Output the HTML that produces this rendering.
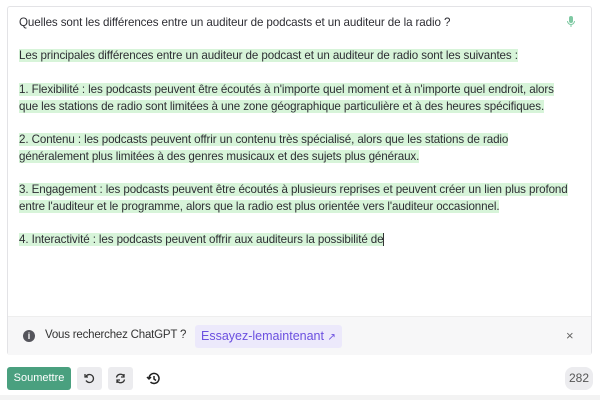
<!DOCTYPE html>
<html><head><meta charset="utf-8"><style>
body{margin:0;width:600px;height:400px;background:#fff;font-family:"Liberation Sans",sans-serif;position:relative;overflow:hidden}
.box{position:absolute;left:7px;top:6px;width:585px;height:349px;border:1px solid #e3e3e6;border-radius:3px;box-sizing:border-box}
.txt{position:absolute;left:19px;top:15px;width:560px;white-space:nowrap;font-size:11.6px;line-height:16.7px;color:#2d2d33;letter-spacing:-0.1px}
.g{background:#d7f4d9}
.banner{position:absolute;left:8px;top:316px;width:583px;height:38px;background:#f7f7f8;border-top:1px solid #eee}
.bot{position:absolute;left:0;right:0;top:395px;height:5px;background:#f3f3f3}
.btn{position:absolute;top:367px;height:23px;border-radius:3px}
</style></head><body>
<div class="box"></div>
<svg style="position:absolute;left:566px;top:15px" width="10" height="13" viewBox="0 0 10 13"><rect x="3" y="1" width="4" height="7" rx="2" fill="#7fc9a3"/><path d="M1.5 6a3.5 3.5 0 0 0 7 0M5 9.5v2.5" stroke="#7fc9a3" fill="none"/></svg>
<div class="txt">Quelles sont les différences entre un auditeur de podcasts et un auditeur de la radio ?<br><br><span class="g">Les principales différences entre un auditeur de podcast et un auditeur de radio sont les suivantes :</span><br><br><span class="g">1. Flexibilité : les podcasts peuvent être écoutés à n'importe quel moment et à n'importe quel endroit, alors</span><br><span class="g">que les stations de radio sont limitées à une zone géographique particulière et à des heures spécifiques.</span><br><br><span class="g">2. Contenu : les podcasts peuvent offrir un contenu très spécialisé, alors que les stations de radio</span><br><span class="g">généralement plus limitées à des genres musicaux et des sujets plus généraux.</span><br><br><span class="g">3. Engagement : les podcasts peuvent être écoutés à plusieurs reprises et peuvent créer un lien plus profond</span><br><span class="g"> entre l'auditeur et le programme, alors que la radio est plus orientée vers l'auditeur occasionnel.</span><br><br><span class="g">4. Interactivité : les podcasts peuvent offrir aux auditeurs la possibilité de</span><span style="border-left:1px solid #333"></span></div>
<div class="banner">
<div style="position:absolute;left:15px;top:13px;width:12px;height:12px;border-radius:50%;background:#55555c;color:#fff;font-size:9px;font-weight:bold;text-align:center;line-height:12px">i</div>
<div style="position:absolute;left:37px;top:12px;font-size:11.5px;letter-spacing:-0.2px;color:#333">Vous recherchez ChatGPT ?</div>
<div style="position:absolute;left:187px;top:8px;width:147px;height:23px;background:#ece9fb;border-radius:3px;color:#6b4fe0;font-size:12.5px;line-height:23px;padding-left:6px;box-sizing:border-box">Essayez-lemaintenant <span style="font-size:10px">↗</span></div>
<div style="position:absolute;left:558px;top:11px;font-size:13px;color:#666">×</div>
</div>
<div class="btn" style="left:7px;width:64px;background:#4aa07f;color:#fff;font-size:11px;line-height:23px;text-align:center">Soumettre</div>
<div class="btn" style="left:77px;width:25px;background:#ececef"><svg width="25" height="23" viewBox="0 0 25 23"><path d="M9 9.5a4 4 0 1 1 0 4" stroke="#333" stroke-width="1.3" fill="none"/><path d="M8 7v3h3" stroke="#333" stroke-width="1.3" fill="none"/></svg></div>
<div class="btn" style="left:108px;width:25px;background:#ececef"><svg width="25" height="23" viewBox="0 0 25 23"><path d="M8.5 10.5a4 4 0 0 1 7.5-1M16.5 12.5a4 4 0 0 1-7.5 1" stroke="#333" stroke-width="1.3" fill="none"/><path d="M16 7v3h-3M9 16v-3h3" stroke="#333" stroke-width="1.3" fill="none"/></svg></div>
<svg style="position:absolute;left:145px;top:370px" width="17" height="17" viewBox="0 0 17 17"><path d="M4 8.5a5 5 0 1 1 1.5 3.5" stroke="#222" stroke-width="1.5" fill="none"/><path d="M2 7l2 2 2-2" stroke="#222" stroke-width="1.5" fill="none"/><path d="M9 6v3l2 1.5" stroke="#222" stroke-width="1.5" fill="none"/></svg>
<div class="btn" style="left:565px;width:28px;background:#ececef;border-radius:8px;color:#555;font-size:12px;line-height:23px;text-align:center">282</div>
<div class="bot"></div>
</body></html>
